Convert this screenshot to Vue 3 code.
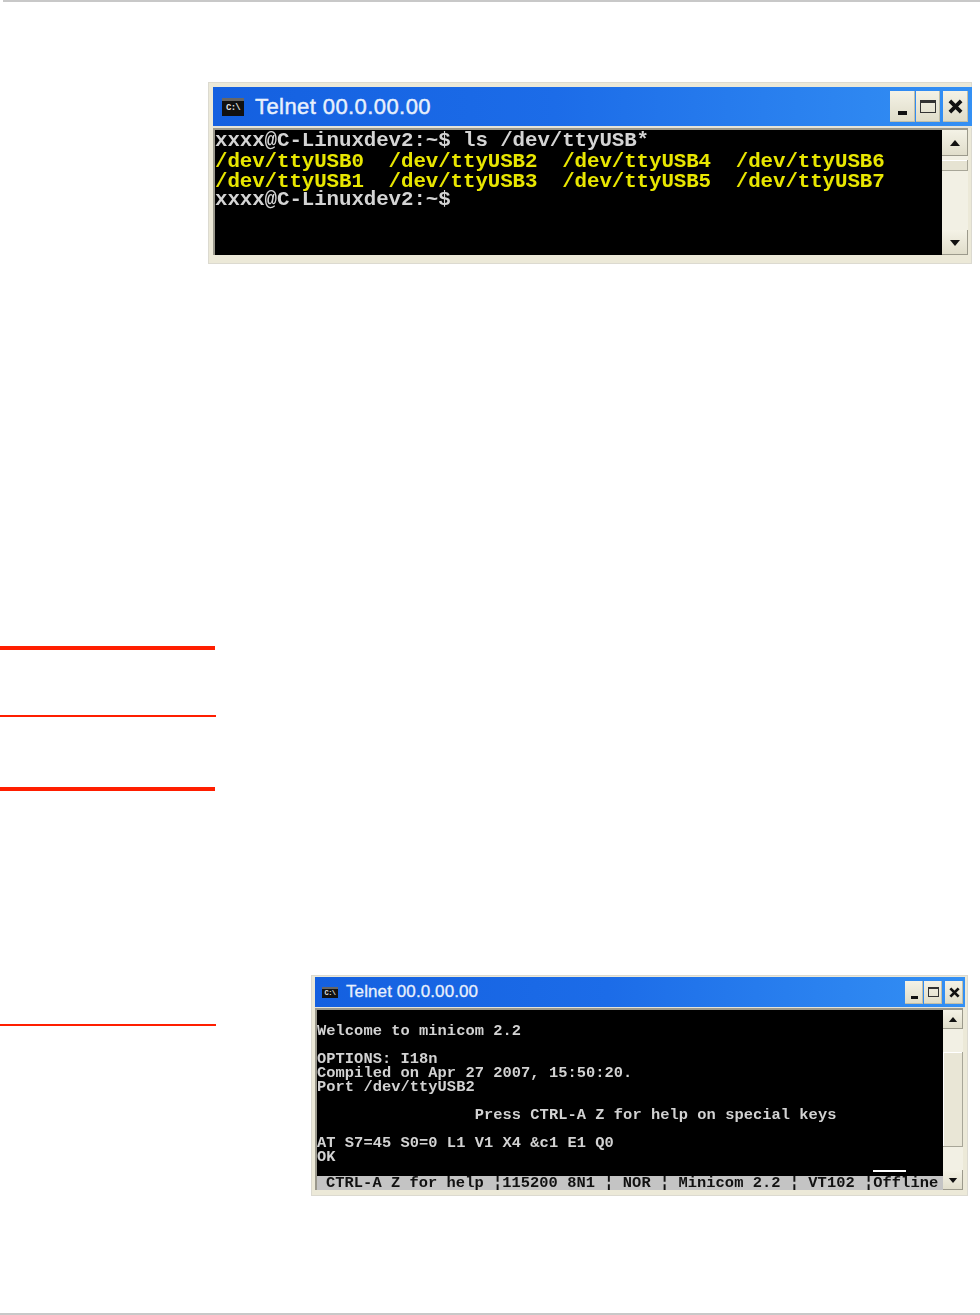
<script setup>
const topLines = [
  { text: 'xxxx@C-Linuxdev2:~$ ls /dev/ttyUSB*', cls: 'w' },
  { text: '/dev/ttyUSB0  /dev/ttyUSB2  /dev/ttyUSB4  /dev/ttyUSB6', cls: 'y' },
  { text: '/dev/ttyUSB1  /dev/ttyUSB3  /dev/ttyUSB5  /dev/ttyUSB7', cls: 'y' },
  { text: 'xxxx@C-Linuxdev2:~$', cls: 'w' }
]
const lowLines = [
  '',
  'Welcome to minicom 2.2',
  '',
  'OPTIONS: I18n',
  'Compiled on Apr 27 2007, 15:50:20.',
  'Port /dev/ttyUSB2',
  '',
  '                 Press CTRL-A Z for help on special keys',
  '',
  'AT S7=45 S0=0 L1 V1 X4 &c1 E1 Q0',
  'OK'
]
const statusLine = 'CTRL-A Z for help ¦115200 8N1 ¦ NOR ¦ Minicom 2.2 ¦ VT102 ¦Offline'
</script>

<template>
  <div class="page">
    <div class="top-rule"></div>

    <section class="win big">
      <header class="title">
        <span class="cmd">C:\</span>
        <span class="name">Telnet 00.0.00.00</span>
        <span class="btns">
          <span class="btn b-min"><i class="min"></i></span>
          <span class="btn b-max"><i class="max"></i></span>
          <span class="btn b-x"><svg viewBox="0 0 12 12"><path d="M1.5 1.5 10.5 10.5M10.5 1.5 1.5 10.5"/></svg></span>
        </span>
      </header>
      <div class="body">
        <div class="term">
          <div v-for="(l, i) in topLines" :key="i" class="line" :class="l.cls">{{ l.text }}</div>
        </div>
        <div class="bar">
          <span class="sb up"><svg viewBox="0 0 10 6"><path d="M5 0 10 6H0z"/></svg></span>
          <span class="thumb"></span>
          <span class="track"></span>
          <span class="sb down"><svg viewBox="0 0 10 6"><path d="M0 0H10L5 6z"/></svg></span>
        </div>
      </div>
    </section>

    <div class="r r1"></div>
    <div class="r r2"></div>
    <div class="r r3"></div>

    <div class="lower">
      <div class="lower-side"><div class="r r4"></div></div>
      <section class="win small">
        <header class="title">
          <span class="cmd">C:\</span>
          <span class="name">Telnet 00.0.00.00</span>
          <span class="btns">
            <span class="btn b-min"><i class="min"></i></span>
            <span class="btn b-max"><i class="max"></i></span>
            <span class="btn b-x"><svg viewBox="0 0 12 12"><path d="M1.5 1.5 10.5 10.5M10.5 1.5 1.5 10.5"/></svg></span>
          </span>
        </header>
        <div class="body">
          <div class="term-wrap">
            <div class="term">
              <div v-for="(l, i) in lowLines" :key="i" class="line">{{ l }}</div>
              <span class="cursor"></span>
            </div>
            <div class="status">{{ statusLine }}</div>
          </div>
          <div class="bar">
            <span class="sb up"><svg viewBox="0 0 10 6"><path d="M5 0 10 6H0z"/></svg></span>
            <span class="gap"></span>
            <span class="thumb"></span>
            <span class="gap"></span>
            <span class="sb down"><svg viewBox="0 0 10 6"><path d="M0 0H10L5 6z"/></svg></span>
          </div>
        </div>
      </section>
    </div>

    <div class="bottom-rule"></div>
  </div>
</template>

<style scoped>
.page {
  width: 980px;
  height: 1315px;
  background: #fff;
  overflow: hidden;
  display: flex;
  flex-direction: column;
  font-family: "Liberation Sans", Arial, sans-serif;
}
.top-rule { height: 2px; margin-left: 3px; background: #c8c8c8; flex: none; }
.bottom-rule { height: 2px; margin-top: auto; background: #c8c8c8; flex: none; }

.win {
  flex: none;
  background: #ece9d8;
  box-shadow: inset 0 0 0 1px #dcdad0;
  display: flex;
  flex-direction: column;
  box-sizing: border-box;
}
.big { width: 764px; height: 182px; margin: 80px 0 0 208px; padding: 5px 0 9px 5px; }
.small { width: 657px; height: 221px; padding: 2px 3px 6px 4px; }

.title {
  display: flex;
  align-items: center;
  box-sizing: border-box;
  background: linear-gradient(90deg, #1460e0 0%, #1c6ce8 45%, #3490f4 100%);
  border-bottom: 2px solid #e6e4d8;
  flex: none;
}
.big .title { height: 41px; padding: 0 4px 0 9px; }
.small .title { height: 31px; padding: 0 2px 0 7px; border-bottom-width: 1px; }

.cmd {
  background: #111;
  color: #e2e2e2;
  font: bold 9px "Liberation Mono", monospace;
  display: inline-block;
  text-align: center;
  border-top: 3px solid #666;
  box-sizing: border-box;
  flex: none;
}
.big .cmd { width: 22px; height: 18px; line-height: 14px; letter-spacing: -.8px; }
.small .cmd { width: 16px; height: 11px; font-size: 7px; line-height: 8px; letter-spacing: -.6px; border-top-width: 2px; }

.name { color: #e8f0fc; }
.big .name { font-size: 22px; margin-left: 11px; letter-spacing: .42px; -webkit-text-stroke: .45px #e8f0fc; }
.small .name { font-size: 17px; margin-left: 8px; letter-spacing: .1px; -webkit-text-stroke: .3px #e8f0fc; }

.btns { margin-left: auto; display: flex; }
.btn {
  background: linear-gradient(#f4f2e6, #dfdcc8);
  box-shadow: inset -1px -1px 0 #c2bfa8;
  display: flex;
  align-items: center;
  justify-content: center;
  box-sizing: border-box;
  position: relative;
}
.btn svg { display: block; fill: none; stroke: #111; stroke-width: 3; }
.big .btn { height: 31px; }
.big .b-min { width: 25px; margin-right: 1px; }
.big .b-max { width: 24px; margin-right: 3px; }
.big .b-x { width: 25px; }
.big .b-x svg { width: 15px; height: 15px; }
.small .btn { height: 23px; width: 18px; }
.small .b-min { margin-right: 1px; }
.small .b-max { margin-right: 3px; }
.small .b-x svg { width: 11px; height: 11px; }

.min { display: block; background: #111; position: absolute; }
.big .min { width: 9px; height: 4px; left: 8px; bottom: 7px; }
.small .min { width: 7px; height: 3px; left: 6px; bottom: 5px; }
.max { display: block; box-sizing: border-box; border: 1px solid #333; }
.big .max { width: 16px; height: 13px; border-top-width: 3px; }
.small .max { width: 11px; height: 10px; border-top-width: 2px; }

.body {
  flex: 1;
  min-height: 0;
  display: flex;
  background: #000;
  border-top: 2px solid #9a988c;
  border-left: 2px solid #9a988c;
}
.big .body { margin-right: 4px; }
.small .body { margin-right: 2px; }

.term {
  flex: 1;
  min-width: 0;
  position: relative;
  color: #d2d2d2;
  font-family: "Liberation Mono", "DejaVu Sans Mono", monospace;
  font-weight: 700;
  white-space: pre;
}
.line { filter: blur(.35px); }
.big .term {
  font-size: 20.8px;
  line-height: 20px;
  padding-top: 1px;
  letter-spacing: -.08px;
}
.big .line:last-child { line-height: 16px; padding-top: 1px; }
.big .y { padding-top: 1px; margin-bottom: -1px; }
.small .term { font-size: 15.4px; line-height: 14px; letter-spacing: .04px; }
.small .line { min-height: 14px; }
.w { color: #d4d4d4; }
.y { color: #e8e600; }

.bar {
  flex: none;
  background: #f2f0e4;
  display: flex;
  flex-direction: column;
}
.big .bar { width: 26px; }
.small .bar { width: 20px; }
.sb {
  background: linear-gradient(#f4f2e6, #e0ddca);
  box-shadow: inset -1px -1px 0 #9c9a8c;
  display: flex;
  align-items: center;
  justify-content: center;
  flex: none;
}
.sb svg { display: block; fill: #111; }
.big .up { height: 26px; }
.big .down { height: 25px; }
.big .sb svg { width: 12px; height: 6px; }
.small .up { height: 19px; }
.small .down { height: 20px; }
.small .sb svg { width: 10px; height: 5px; }
.big .thumb {
  height: 11px;
  margin-top: 4px;
  flex: none;
  background: #e6e3d2;
  box-shadow: inset -1px -1px 0 #a8a698, inset 0 1px 0 #fff;
}
.track { flex: 1; }
.gap { height: 23px; flex: none; }
.small .thumb {
  flex: 1;
  background: #e9e6d6;
  box-shadow: inset -1px -1px 0 #a8a698, inset 1px 1px 0 #fff;
}

.r { background: #ff1e00; flex: none; }
.r1 { margin-top: 382px; width: 215px; height: 4px; }
.r2 { margin-top: 65px; width: 216px; height: 2px; }
.r3 { margin-top: 70px; width: 215px; height: 4px; }
.r4 { margin-top: 49px; width: 216px; height: 2px; }

.lower { display: flex; margin-top: 184px; flex: none; }
.lower-side { width: 311px; flex: none; }

.term-wrap { flex: 1; min-width: 0; display: flex; flex-direction: column; }
.term-wrap .term { flex: 1; }
.status {
  flex: none;
  height: 14px;
  background: #c4c4c4;
  color: #111;
  font: 700 15.4px/14px "Liberation Mono", monospace;
  letter-spacing: .04px;
  white-space: pre;
  padding-left: 9px;
  filter: blur(.3px);
}
.cursor {
  position: absolute;
  left: 556px;
  top: 160px;
  width: 33px;
  height: 2px;
  background: #fff;
}
</style>
